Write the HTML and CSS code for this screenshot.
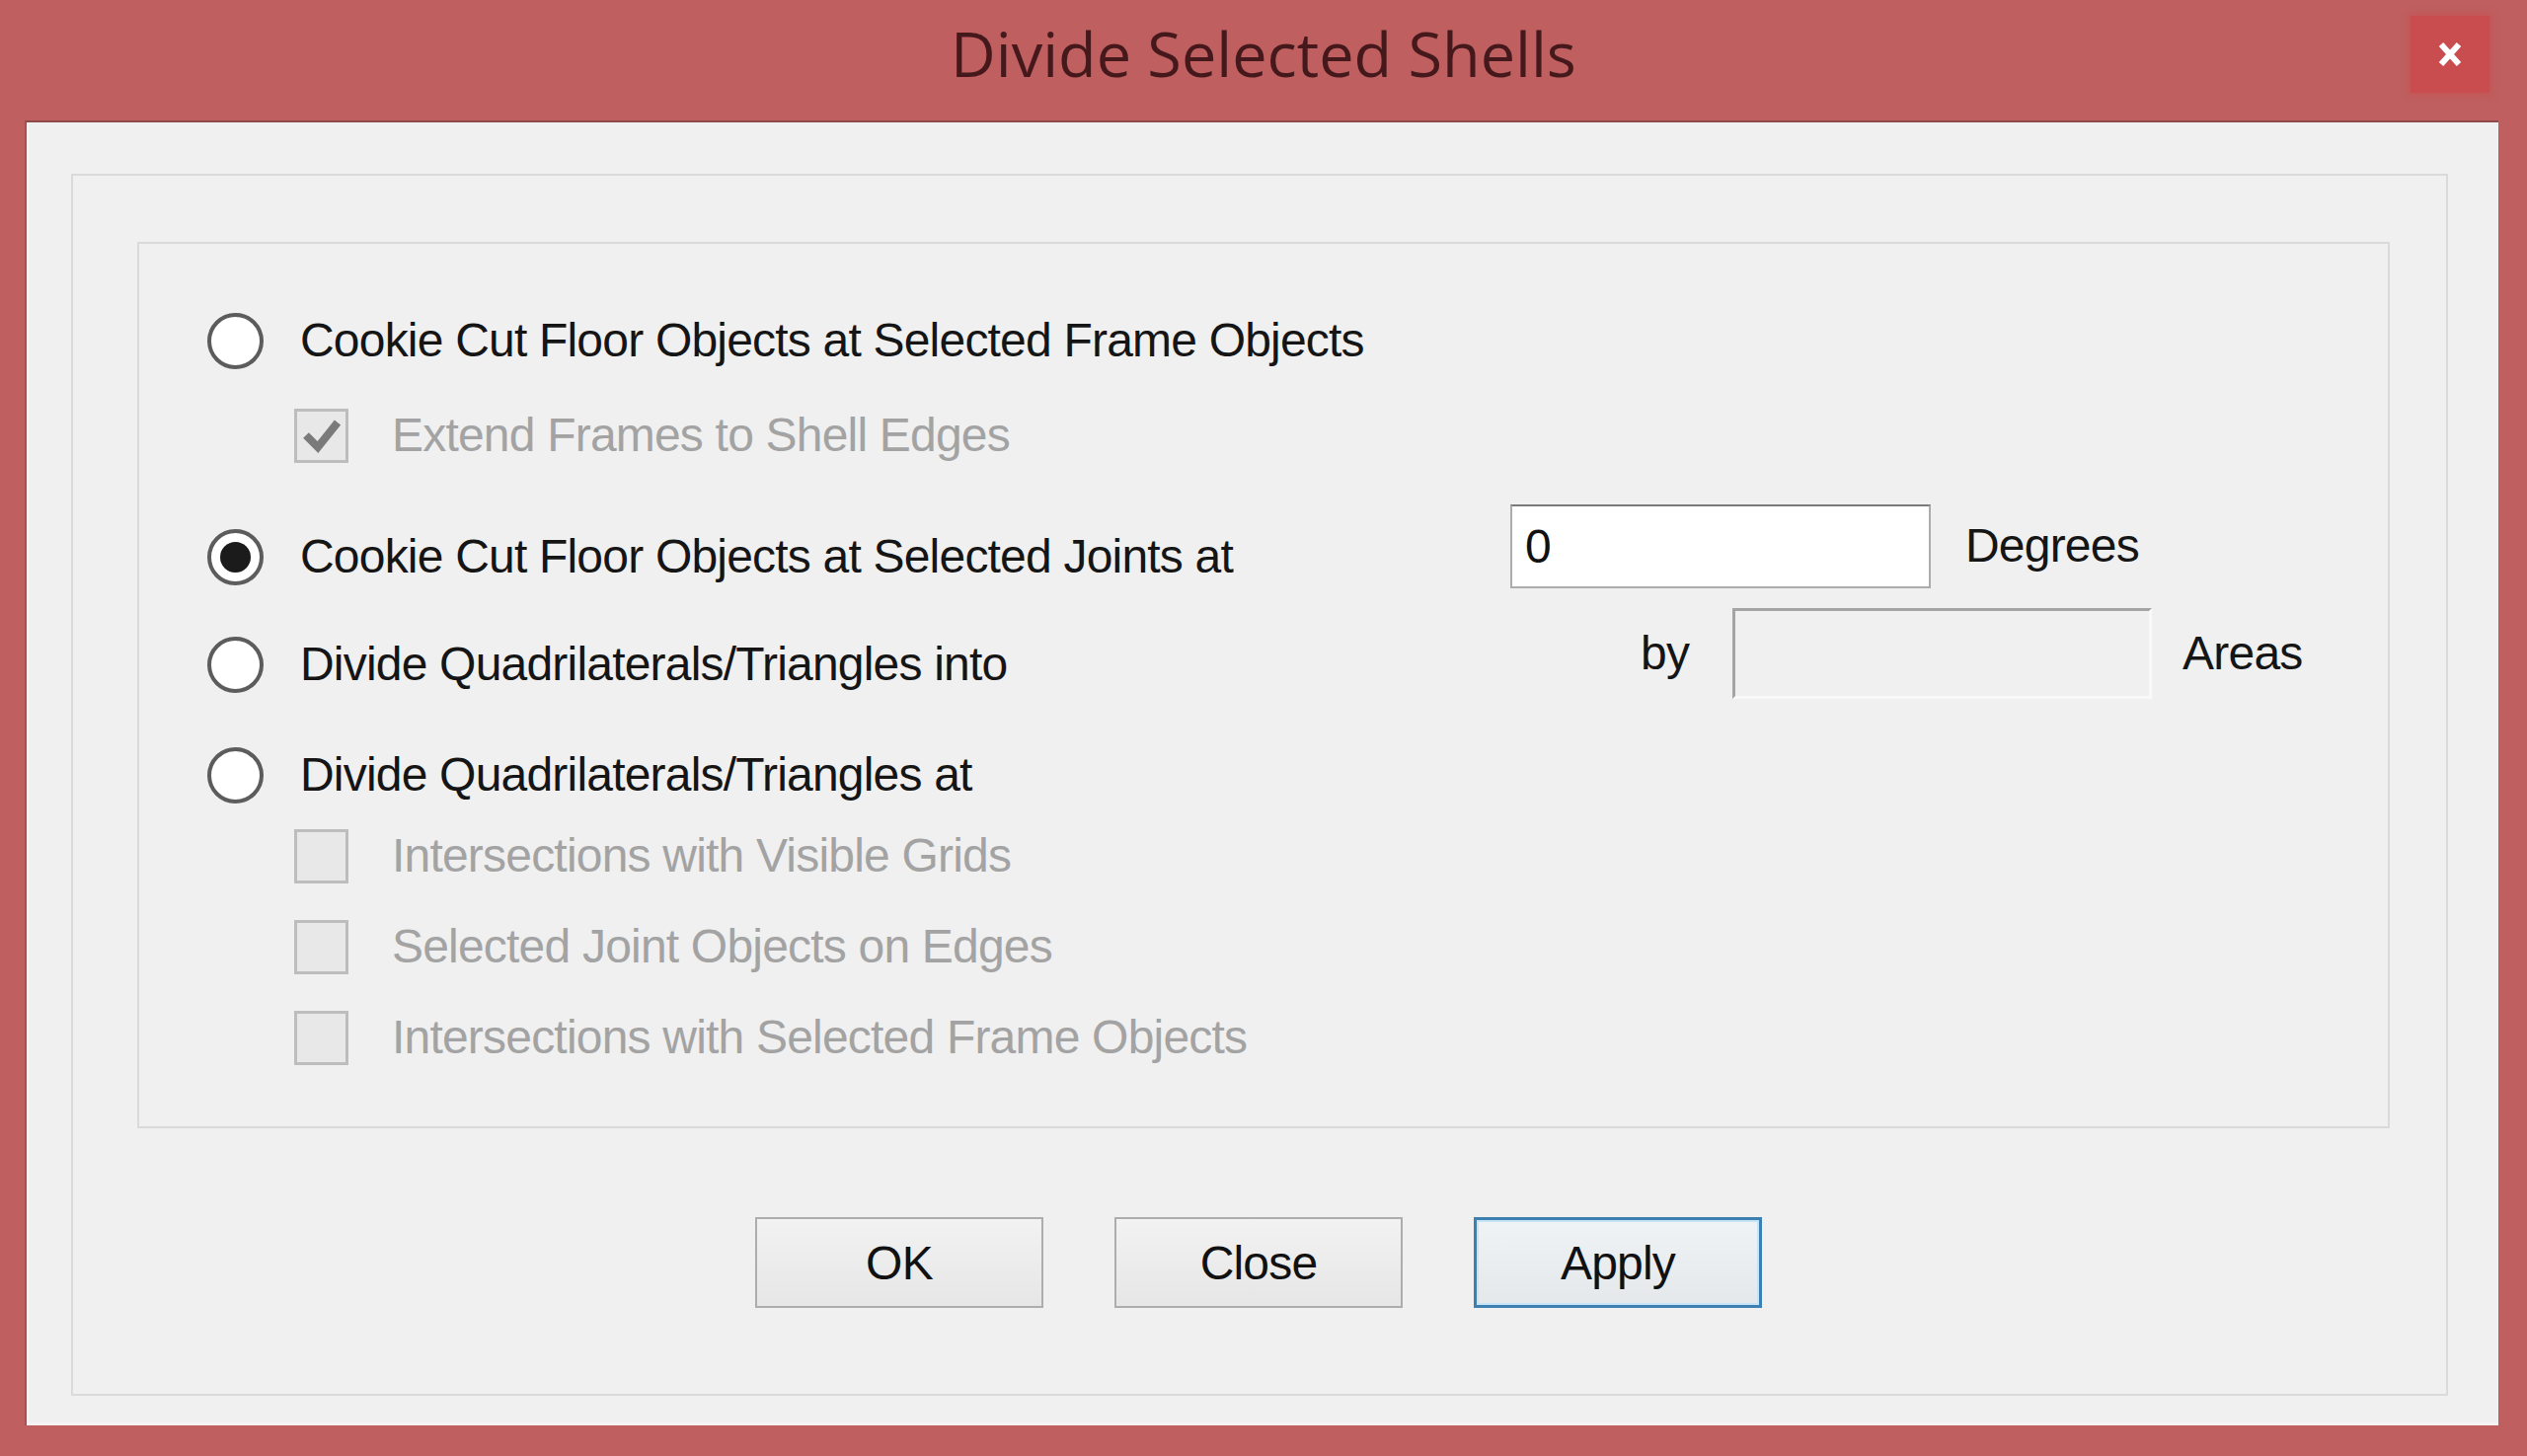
FILE: index.html
```html
<!DOCTYPE html>
<html>
<head>
<meta charset="utf-8">
<title>Divide Selected Shells</title>
<link rel="stylesheet" href="styles.css">
</head>
<body>
<div class="window">
  <div class="titlebar">
    <div class="title-spacer"></div>
    <div class="title">Divide Selected Shells</div>
    <div class="title-right">
      <div class="close-btn">
        <svg width="24" height="26" viewBox="0 0 24 26"><path d="M3 3 L21 23 M21 3 L3 23" stroke="#fff" stroke-width="6" stroke-linecap="butt"/></svg>
      </div>
    </div>
  </div>
  <div class="client">
    <div class="group outer">
      <div class="group inner">
        <div class="row r1">
          <span class="radio"></span>
          <span class="label">Cookie Cut Floor Objects at Selected Frame Objects</span>
        </div>
        <div class="row r2 sub">
          <span class="check">
            <svg width="49" height="49" viewBox="0 0 49 49"><path d="M9 24 L21 36 L41 11" fill="none" stroke="#7a7a7a" stroke-width="8"/></svg>
          </span>
          <span class="label disabled">Extend Frames to Shell Edges</span>
        </div>
        <div class="row r3">
          <div class="opt-main">
            <span class="radio on"></span>
            <span class="label">Cookie Cut Floor Objects at Selected Joints at</span>
          </div>
          <div class="fields">
            <div class="input">0</div>
            <span class="label unit">Degrees</span>
          </div>
        </div>
        <div class="row r4">
          <div class="opt-main">
            <span class="radio"></span>
            <span class="label">Divide Quadrilaterals/Triangles into</span>
          </div>
          <div class="fields by-fields">
            <span class="label">by</span>
            <div class="input off"></div>
            <span class="label areas">Areas</span>
          </div>
        </div>
        <div class="row r5">
          <span class="radio"></span>
          <span class="label">Divide Quadrilaterals/Triangles at</span>
        </div>
        <div class="row r6 sub">
          <span class="check"></span>
          <span class="label disabled">Intersections with Visible Grids</span>
        </div>
        <div class="row r7 sub">
          <span class="check"></span>
          <span class="label disabled">Selected Joint Objects on Edges</span>
        </div>
        <div class="row r8 sub">
          <span class="check"></span>
          <span class="label disabled">Intersections with Selected Frame Objects</span>
        </div>
      </div>
      <div class="buttons">
        <div class="btn">OK</div>
        <div class="btn">Close</div>
        <div class="btn default">Apply</div>
      </div>
    </div>
  </div>
</div>
</body>
</html>
```

FILE: styles.css
```css
html, body {
  margin: 0;
  padding: 0;
  width: 2560px;
  height: 1475px;
  overflow: hidden;
  background: #bf5f5f;
}

.window {
  width: 2560px;
  height: 1475px;
  background: #bf5f5f;
  display: flex;
  flex-direction: column;
  font-family: "Liberation Sans", Arial, sans-serif;
}

.titlebar {
  height: 122px;
  flex: none;
  display: grid;
  grid-template-columns: 1fr auto 1fr;
  align-items: start;
}

.title {
  font-family: "Open Sans", "Noto Sans", sans-serif;
  font-size: 63px;
  line-height: 63px;
  padding-top: 22px;
  color: #45191c;
  white-space: nowrap;
}

.title-right {
  display: flex;
  justify-content: flex-end;
  padding-top: 16px;
  padding-right: 38px;
}

.close-btn {
  width: 80px;
  height: 78px;
  background: #c94c4e;
  display: flex;
  align-items: center;
  justify-content: center;
  box-shadow: 0 0 6px 2px rgba(201, 76, 78, 0.6);
}

.client {
  flex: 1;
  margin: 0 29px 31px 25px;
  background: #f0f0f0;
  border-top: 2px solid #8f4a4a;
  border-left: 2px solid #9a5656;
  box-shadow: inset 2px 0 0 #fbf7f7, inset 0 -3px 0 #f7f3f5;
  padding: 52px 51px 30px 45px;
  display: flex;
  flex-direction: column;
}

.group {
  border: 2px solid #dadada;
}

.outer {
  flex: 1;
  padding: 67px 57px 0 65px;
  display: flex;
  flex-direction: column;
}

.inner {
  padding: 68px 0 60px 69px;
  display: flex;
  flex-direction: column;
}

.row {
  display: flex;
  align-items: center;
  height: 60px;
  flex: none;
}

.r2 { margin-top: 36px; }
.r3 { margin-top: 63px; }
.r4 { margin-top: 49px; }
.r5 { margin-top: 52px; }
.r6 { margin-top: 22px; }
.r7 { margin-top: 32px; }
.r8 { margin-top: 32px; }

.sub {
  padding-left: 88px;
}

.label {
  font-size: 48px;
  letter-spacing: -0.8px;
  color: #151515;
  white-space: nowrap;
  line-height: 56px;
}

.label.disabled {
  color: #a3a3a3;
}

.radio {
  width: 49px;
  height: 49px;
  border-radius: 50%;
  border: 4px solid #5c5c5c;
  background: #ffffff;
  display: flex;
  align-items: center;
  justify-content: center;
  flex: none;
  margin-right: 37px;
}

.radio.on::after {
  content: "";
  width: 31px;
  height: 31px;
  border-radius: 50%;
  background: #1b1b1b;
}

.check {
  width: 49px;
  height: 49px;
  border: 3px solid #bdbdbd;
  background: #e8e8e8;
  flex: none;
  margin-right: 44px;
  display: flex;
}

.opt-main {
  width: 1320px;
  flex: none;
  display: flex;
  align-items: center;
}

.fields {
  display: flex;
  align-items: center;
  margin-bottom: 22px;
}

.input {
  border: 2px solid #acacac;
  border-top-color: #7b7b7b;
  background: #ffffff;
  font-size: 48px;
  line-height: 81px;
  padding-left: 13px;
  box-sizing: border-box;
  width: 426px;
  height: 85px;
  color: #111;
}

.unit {
  margin-left: 35px;
}

.by-fields {
  padding-left: 132px;
}

.input.off {
  width: 425px;
  height: 92px;
  background: #f0f0f0;
  border: 3px solid #f9f9f9;
  border-top-color: #a4a4a4;
  border-left-color: #a4a4a4;
  margin-left: 44px;
}

.areas {
  margin-left: 31px;
}

.buttons {
  display: flex;
  justify-content: center;
  gap: 72px;
  margin-top: 90px;
  padding-right: 10px;
}

.btn {
  width: 292px;
  height: 92px;
  box-sizing: border-box;
  border: 2px solid #adadad;
  background: linear-gradient(#f2f2f2, #e6e6e6);
  display: flex;
  align-items: center;
  justify-content: center;
  font-size: 48px;
  letter-spacing: -0.8px;
  color: #111;
}

.btn.default {
  border: 3px solid #3c7fb1;
  box-shadow: inset 0 0 0 2px #c7e4f7;
  background: linear-gradient(#f0f3f5, #e4e8eb);
}
```
